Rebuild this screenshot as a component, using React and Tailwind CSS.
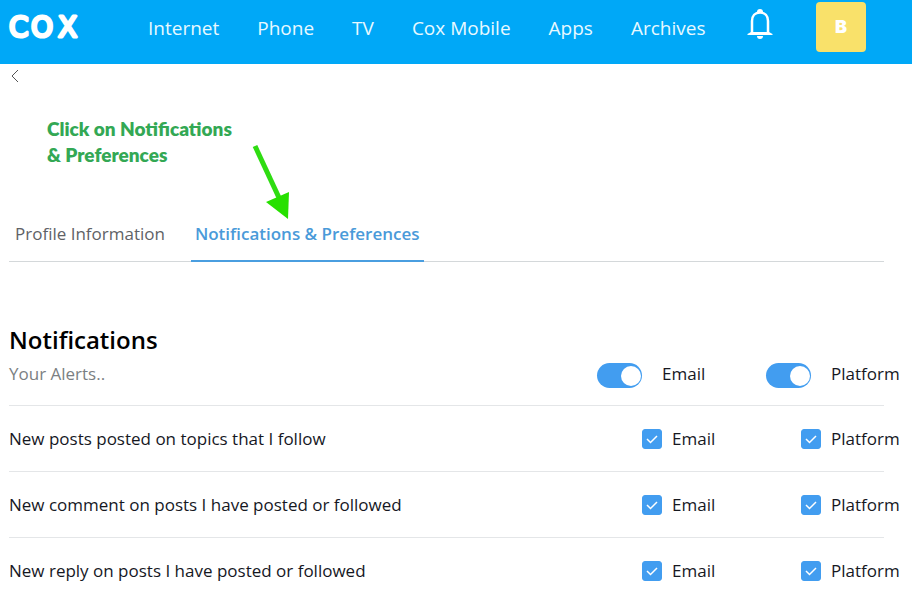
import React, { useState } from "react";

const NAV_LINKS = ["Internet", "Phone", "TV", "Cox Mobile", "Apps", "Archives"];

const TABS = ["Profile Information", "Notifications & Preferences"];

const CHANNELS = ["Email", "Platform"];

const ALERTS = [
  { id: "posts", label: "New posts posted on topics that I follow" },
  { id: "comments", label: "New comment on posts I have posted or followed" },
  { id: "replies", label: "New reply on posts I have posted or followed" },
];

/* ─────────────────────────────────────────────
   Icons
───────────────────────────────────────────── */

const CoxLogo = () => (
  <svg width="76" height="36" viewBox="0 0 76 36" role="img" aria-label="Cox">
    <text
      x="1 23 50"
      y="27"
      fill="#fff"
      stroke="#fff"
      strokeWidth="3"
      strokeLinejoin="round"
      className="font-['DejaVu_Sans'] text-[28px]"
    >
      COX
    </text>
  </svg>
);

const BackIcon = () => (
  <svg width="12" height="16" viewBox="0 0 12 16" fill="none" aria-hidden="true">
    <path d="M9 2L3 8l6 6" stroke="#555" strokeWidth="1" />
  </svg>
);

const BellIcon = () => (
  <svg width="26" height="32" viewBox="0 0 26 32" fill="none" aria-hidden="true">
    <path d="M10 4a3 3 0 0 1 6 0z" fill="#fff" />
    <path
      d="M5 25V13C5 8 8 4.500 13 4.500s8 3.500 8 8.500v12"
      stroke="#fff"
      strokeWidth="2.5"
    />
    <path d="M.5 27v-1L4 24h18l3.500 2v1z" fill="#fff" />
    <path d="M10 28h6a3 3 0 0 1-6 0z" fill="#fff" />
  </svg>
);

/* ─────────────────────────────────────────────
   Sub-components
───────────────────────────────────────────── */

const Header = () => (
  <header className="flex h-16 items-center bg-[#00a8f7] pl-2 pr-11">
    <a href="#home" className="mb-2 shrink-0">
      <CoxLogo />
    </a>
    <nav className="ml-16 mb-2 flex items-center gap-[38px] whitespace-nowrap text-[19px] text-[#e8f9ff]">
      {NAV_LINKS.map((link) => (
        <a key={link} href={`#${link}`}>
          {link}
        </a>
      ))}
    </nav>
    <button type="button" aria-label="Alerts" className="ml-[42px] mb-4 shrink-0">
      <BellIcon />
    </button>
    <button
      type="button"
      className="ml-auto mr-[2px] mb-[10px] size-[50px] shrink-0 rounded bg-[#f9e16a] font-['Inter'] text-lg font-black text-white"
    >
      B
    </button>
  </header>
);

const Toggle = ({ label, checked, onChange }) => (
  <label className="flex items-center gap-5">
    <span className="relative mt-1 h-[25px] w-[45px] shrink-0">
      <input
        type="checkbox"
        role="switch"
        checked={checked}
        onChange={onChange}
        className="peer block h-full w-full appearance-none rounded-full bg-gray-300 checked:bg-[#429df0]"
      />
      <span className="pointer-events-none absolute left-1 top-[3px] size-5 rounded-full bg-white peer-checked:left-6" />
    </span>
    {label}
  </label>
);

const Tick = ({ label, checked, onChange }) => (
  <label className="flex items-center gap-[10px]">
    <span className="relative size-5 shrink-0">
      <input
        type="checkbox"
        checked={checked}
        onChange={onChange}
        className="peer block size-5 appearance-none rounded-[3px] border border-gray-300 checked:border-[#429df0] checked:bg-[#429df0]"
      />
      <svg
        viewBox="0 0 20 20"
        fill="none"
        stroke="#fff"
        strokeWidth="1.5"
        className="pointer-events-none absolute inset-0 hidden peer-checked:block"
      >
        <path d="M5 10l3.500 3.500L15 7" />
      </svg>
    </span>
    {label}
  </label>
);

/* ─────────────────────────────────────────────
   Main component
───────────────────────────────────────────── */

const App = () => {
  const [activeTab, setActiveTab] = useState(TABS[1]);
  const [channels, setChannels] = useState({ Email: true, Platform: true });
  const [muted, setMuted] = useState({});

  const toggleChannel = (name) =>
    setChannels((prev) => ({ ...prev, [name]: !prev[name] }));
  const toggleAlert = (key) =>
    setMuted((prev) => ({ ...prev, [key]: !prev[key] }));

  return (
    <div className="min-h-screen overflow-x-hidden bg-white font-['Open_Sans',sans-serif] text-[17px] leading-6 text-[#16181f]">
      <Header />

      <main className="pl-[9px] pr-7">
        <button type="button" aria-label="Back" className="block pt-1">
          <BackIcon />
        </button>

        {/* Callout pointing at the active tab */}
        <div className="flex pl-[38px] pt-8">
          <p className="w-[205px] font-['Lato'] text-[19px] font-extrabold leading-[26px] text-[#33a854]">
            Click on Notifications
            <br />& Preferences
          </p>
          <svg width="40" height="76" viewBox="0 0 40 76" className="mt-7" aria-hidden="true">
            <path d="M3 2l26 56" stroke="#2fdc12" strokeWidth="5" />
            <path d="M14 58l23-10-1 27z" fill="#27e000" />
          </svg>
        </div>

        <div role="tablist" className="flex gap-[26px] border-b border-[#d4d8da]">
          {TABS.map((tab) => (
            <button
              key={tab}
              type="button"
              role="tab"
              aria-selected={tab === activeTab}
              onClick={() => setActiveTab(tab)}
              className={
                tab === activeTab
                  ? "-mb-px border-b-2 border-[#4a9ee0] px-1 pb-[14px] pt-0.5 font-semibold text-[#4a9ad9]"
                  : "-mb-px border-b-2 border-transparent pl-[6px] pb-[14px] pt-0.5 text-[#5f6266]"
              }
            >
              {tab}
            </button>
          ))}
        </div>

        <section className="pt-[62px]">
          <h2 className="text-2xl font-semibold text-black">Notifications</h2>
          <div className="grid grid-cols-[1fr_169px_118px] items-center border-b border-[#e4e6e8] pb-[17px] pt-[3px]">
            <p className="text-[#7b7f83]">Your Alerts..</p>
            {CHANNELS.map((name) => (
              <Toggle
                key={name}
                label={name}
                checked={channels[name]}
                onChange={() => toggleChannel(name)}
              />
            ))}
          </div>

          {ALERTS.map(({ id, label }) => (
            <div
              key={id}
              className="grid grid-cols-[1fr_159px_83px] items-center border-b border-[#e4e6e8] pb-5 pt-[21px]"
            >
              <p>{label}</p>
              {CHANNELS.map((name) => (
                <Tick
                  key={name}
                  label={name}
                  checked={!muted[id + name]}
                  onChange={() => toggleAlert(id + name)}
                />
              ))}
            </div>
          ))}
        </section>
      </main>
    </div>
  );
};

export default App;
